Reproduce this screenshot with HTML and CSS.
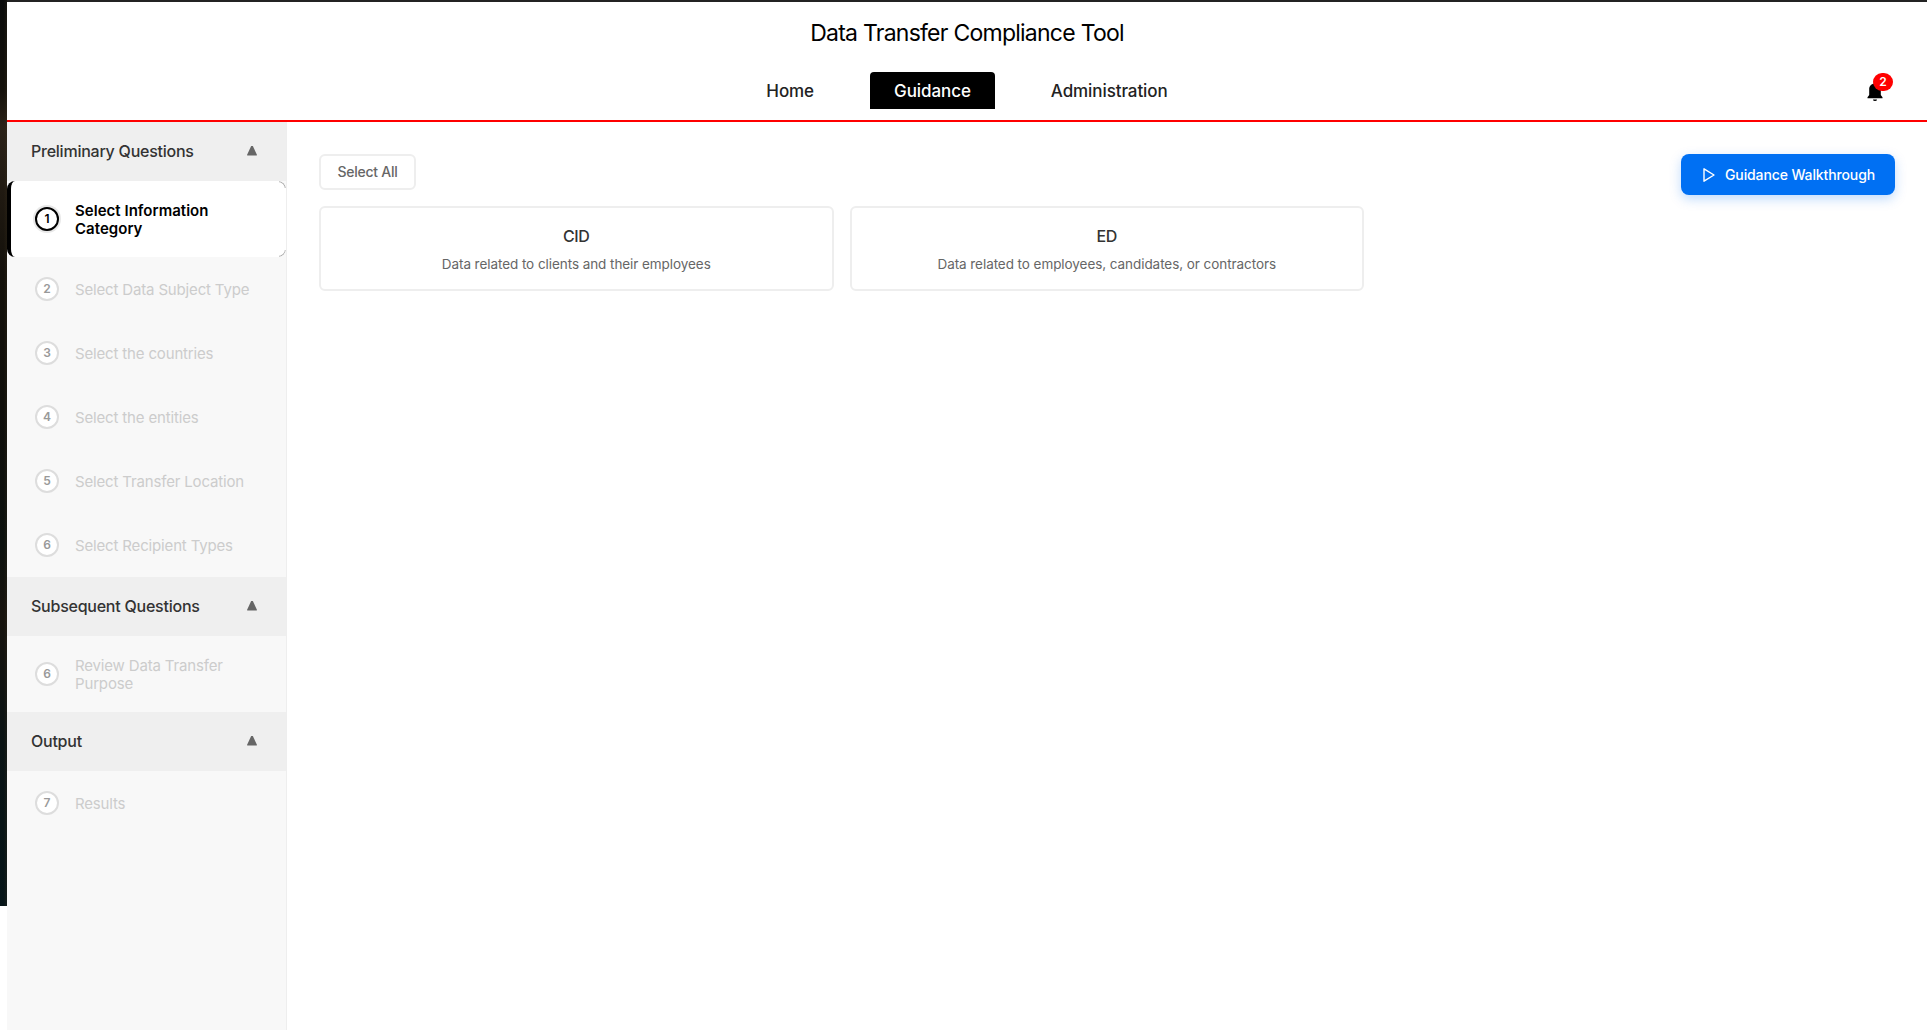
FILE: index.html
```html
<!DOCTYPE html>
<html lang="en">
<head>
<meta charset="utf-8">
<title>Data Transfer Compliance Tool</title>
<link rel="stylesheet" href="styles.css">
</head>
<body>
<div class="backdrop"></div>
<div class="app">
  <header class="header">
    <h1 class="title">Data Transfer Compliance Tool</h1>
    <nav class="nav">
      <a class="nav-link">Home</a>
      <a class="nav-link nav-active">Guidance</a>
      <a class="nav-link">Administration</a>
    </nav>
    <div class="bell">
      <svg width="18" height="20" viewBox="0 0 18 20"><path d="M9 .4c-3.600 0-5.800 2.500-5.800 5.800V12L1.500 14.200v1h15v-1L14.800 12V6.200C14.800 2.900 12.600.4 9 .4z"/><path d="M7 16.400h4a2 1.700 0 0 1-4 0z"/></svg>
      <span class="badge">2</span>
    </div>
  </header>
  <div class="body">
    <aside class="sidebar">
      <div class="section"><span>Preliminary Questions</span><i class="caret"></i></div>
      <div class="step step-active"><b class="num">1</b><span class="label">Select Information Category</span></div>
      <div class="step"><b class="num">2</b><span class="label">Select Data Subject Type</span></div>
      <div class="step"><b class="num">3</b><span class="label">Select the countries</span></div>
      <div class="step"><b class="num">4</b><span class="label">Select the entities</span></div>
      <div class="step"><b class="num">5</b><span class="label">Select Transfer Location</span></div>
      <div class="step"><b class="num">6</b><span class="label">Select Recipient Types</span></div>
      <div class="section"><span>Subsequent Questions</span><i class="caret"></i></div>
      <div class="step"><b class="num">6</b><span class="label">Review Data Transfer Purpose</span></div>
      <div class="section"><span>Output</span><i class="caret"></i></div>
      <div class="step"><b class="num">7</b><span class="label">Results</span></div>
    </aside>
    <main class="main">
      <div class="choices">
        <button class="select-all">Select All</button>
        <div class="cards">
          <div class="card"><h2 class="card-title">CID</h2><p class="card-text">Data related to clients and their employees</p></div>
          <div class="card"><h2 class="card-title">ED</h2><p class="card-text">Data related to employees, candidates, or contractors</p></div>
        </div>
      </div>
      <button class="walk"><svg width="12" height="14" viewBox="0 0 12 14"><path d="M1 .8v12.400L11 7z"/></svg><span>Guidance Walkthrough</span></button>
    </main>
  </div>
</div>
</body>
</html>
```
FILE: styles.css
```css
* { box-sizing: border-box; }
body {
  margin: 0;
  height: 1030px;
  display: flex;
  overflow: hidden;
  background: linear-gradient(#232323, #232323) 7px 0 / 100% 2px no-repeat #fff;
  font-family: Inter, "Liberation Sans", sans-serif;
  color: #000;
}
h1, h2, p { margin: 0; font-weight: 400; }
button { font-family: inherit; }
.backdrop {
  width: 7px;
  height: 906px;
  flex: none;
  background: linear-gradient(90deg, transparent 50%, rgba(60, 50, 30, .25)), linear-gradient(#0a0b0b, #14110b 10%, #2a2117 14%, #14110b 30%, #100f0b 45%, #0c110e 60%, #17130d 68%, #0a1314 82%, #061518);
}
.app { flex: 1; margin-top: 2px; display: flex; flex-direction: column; background: #fff; }
.header {
  position: relative;
  height: 120px;
  border-bottom: 2px solid #f00;
  display: flex;
  flex-direction: column;
  align-items: center;
}
.title { font-size: 23px; line-height: 28px; margin-top: 17px; letter-spacing: -.75px; }
.nav { display: flex; align-items: center; gap: 32px; margin-top: 25px; }
.nav-link {
  height: 37px;
  padding: 1px 24px 0;
  line-height: 37px;
  font-size: 17px;
  font-weight: 500;
  letter-spacing: -.08px;
  color: #222;
}
.nav-active { background: #000; color: #fff; border-radius: 4px 4px 0 0; }
.bell { position: absolute; right: 43px; top: 81px; width: 18px; height: 20px; }
.bell svg { display: block; }
.badge {
  position: absolute;
  left: 7px;
  top: -10px;
  width: 20px;
  height: 18px;
  border-radius: 9px;
  background: #f00;
  color: #fff;
  font-size: 12px;
  font-weight: 600;
  line-height: 18px;
  text-align: center;
}
.body { flex: 1; display: flex; }
.sidebar { width: 280px; background: #f8f8f8; border-right: 1px solid #eee; }
.section {
  height: 59px;
  padding: 0 29px 2px 24px;
  display: flex;
  align-items: center;
  justify-content: space-between;
  background: #efefef;
  color: #333;
  font-size: 16px;
  font-weight: 500;
  letter-spacing: -.24px;
}
.caret { width: 10px; height: 10px; background: #666; clip-path: polygon(44% 0, 56% 0, 100% 94%, 96% 100%, 4% 100%, 0 94%); }
.step {
  min-height: 64px;
  padding: 20px 24px 20px 28px;
  display: flex;
  align-items: center;
  gap: 16px;
  color: #ccc;
  font-size: 15px;
  line-height: 18px;
  letter-spacing: -.16px;
}
.label { margin: 1px 0 -1px; }
.num {
  width: 24px;
  height: 24px;
  flex: none;
  border: 2px solid #ddd;
  border-radius: 50%;
  background: #fff;
  color: #999;
  font-size: 12px;
  font-weight: 600;
  line-height: 20px;
  text-align: center;
  letter-spacing: 0;
}
.step-active {
  position: relative;
  height: 76px;
  padding-left: 24px;
  background: #fff;
  border-left: 4px solid #000;
  border-radius: 8px;
  color: #000;
  font-weight: 600;
  letter-spacing: .03px;
}
.step-active::after {
  content: "";
  position: absolute;
  top: 0;
  right: 0;
  bottom: 0;
  width: 16px;
  border: 1px solid #aaa;
  border-left: 0;
  border-radius: 0 8px 8px 0;
  -webkit-mask: linear-gradient(#000 7px, transparent 7px calc(100% - 7px), #000 calc(100% - 7px)) right / 7px 100% no-repeat;
  mask: linear-gradient(#000 7px, transparent 7px calc(100% - 7px), #000 calc(100% - 7px)) right / 7px 100% no-repeat;
}
.step-active .num { border-color: #000; color: #000; box-shadow: 0 0 0 2px #e8e8e8; }
.main { flex: 1; padding: 32px; display: flex; justify-content: space-between; align-items: flex-start; }
.choices { width: 1045px; }
.select-all {
  display: block;
  width: 97px;
  height: 36px;
  padding: 0 0 1px;
  background: #fff;
  border: 2px solid #eee;
  border-radius: 6px;
  color: #666;
  font-size: 14px;
  font-weight: 500;
  letter-spacing: -.28px;
}
.cards { display: grid; grid-template-columns: 1fr 1fr; gap: 16px; margin-top: 16px; }
.card { height: 85px; border: 2px solid #eee; border-radius: 6px; padding-top: 18px; text-align: center; }
.card-title { font-size: 16px; font-weight: 500; line-height: 20px; color: #333; letter-spacing: -.3px; }
.card-text { margin-top: 10px; font-size: 13.5px; line-height: 17px; color: #666; letter-spacing: -.065px; }
.walk {
  width: 214px;
  height: 41px;
  padding: 0 0 0 22px;
  display: flex;
  align-items: center;
  gap: 10px;
  border: 0;
  border-radius: 8px;
  background: #0070f3;
  color: #fff;
  font-size: 14px;
  font-weight: 500;
  letter-spacing: -.12px;
  box-shadow: 0 4px 12px rgba(0, 112, 243, .25);
}
.walk svg { fill: none; stroke: #fff; stroke-width: 1.400; stroke-linejoin: round; }
```
